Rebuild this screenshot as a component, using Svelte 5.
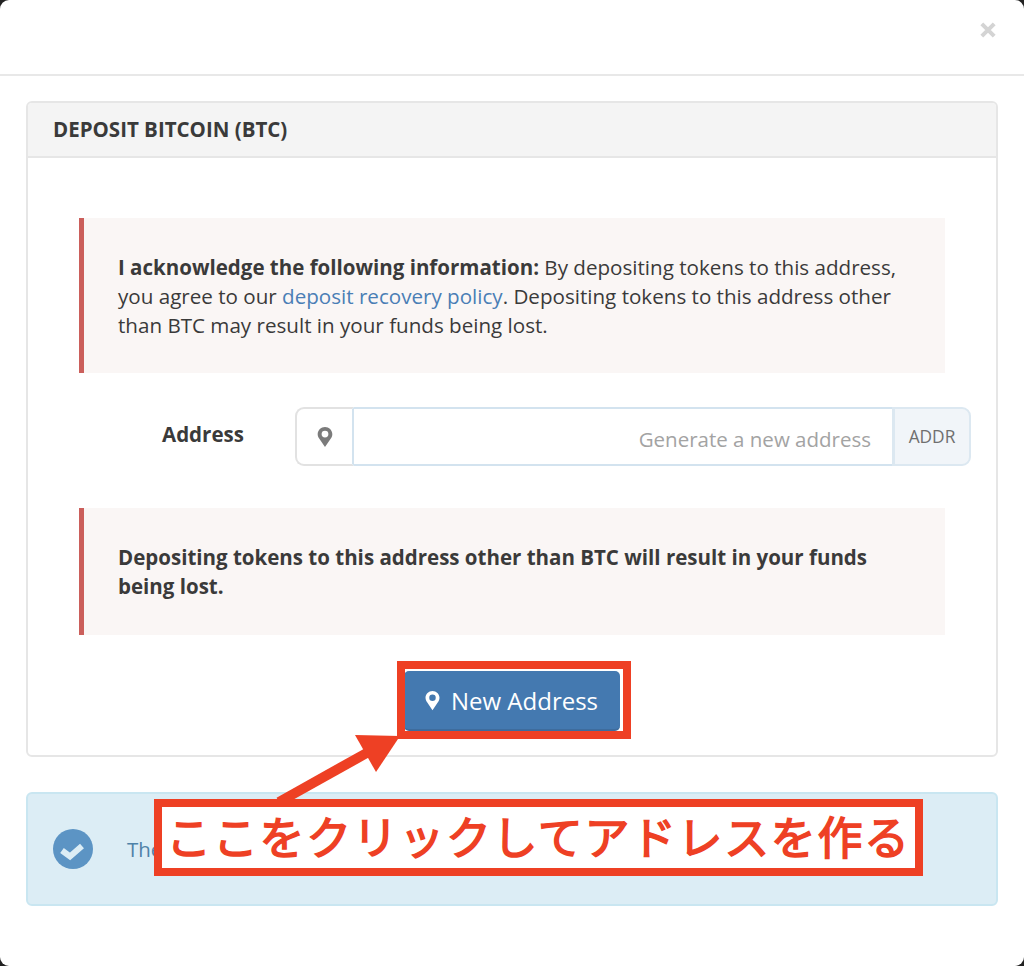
<script>
	const pin = 'M12 1C7.6 1 4 4.5 4 8.9c0 1.3.3 2.4.9 3.6L12 23l7.1-10.5c.6-1.2.9-2.3.9-3.6C20 4.5 16.4 1 12 1zm0 11.5a3.7 3.7 0 1 1 0-7.4 3.7 3.7 0 0 1 0 7.4z';
</script>

<div class="modal">
	<header class="modal-head">
		<button class="close" aria-label="Close">
			<svg viewBox="0 0 16 16" width="16" height="16">
				<path d="M1.8 1.8l12.4 12.4M14.2 1.8L1.8 14.2" stroke="#d4d4d4" stroke-width="4" fill="none" />
			</svg>
		</button>
	</header>

	<div class="modal-body">
		<section class="panel">
			<h2>DEPOSIT BITCOIN (BTC)</h2>
			<div class="panel-body">
				<div class="alert">
					<p>
						<b>I acknowledge the following information:</b> By depositing tokens to this address,
						you agree to our <a href="#policy">deposit recovery policy</a>. Depositing tokens to this
						address other than BTC may result in your funds being lost.
					</p>
				</div>

				<div class="form-row">
					<span class="label">Address</span>
					<div class="input-group">
						<span class="addon-left">
							<svg viewBox="0 0 24 24" width="22" height="22"><path d={pin} fill="#7b7b7b" fill-rule="evenodd" /></svg>
						</span>
						<input type="text" placeholder="Generate a new address" readonly />
						<span class="addon-right">ADDR</span>
					</div>
				</div>

				<div class="alert short">
					<p><b>Depositing tokens to this address other than BTC will result in your funds being lost.</b></p>
				</div>

				<div class="actions">
					<button class="primary">
						<svg viewBox="0 0 24 24" width="21" height="21"><path d={pin} fill="#fff" fill-rule="evenodd" /></svg>
						New Address
					</button>
				</div>
			</div>
		</section>

		<div class="info">
			<svg viewBox="0 0 40 40" width="40" height="40">
				<circle cx="20" cy="20" r="20" fill="#5c94c4" />
				<path d="M9 21.500l8 6L29 17" stroke="#dcedf5" stroke-width="6" fill="none" />
			</svg>
			<span>The</span>
		</div>
	</div>

	<!-- annotations drawn over the screenshot -->
	<div class="mark-button"></div>
	<svg class="arrow" viewBox="0 0 1024 966" width="1024" height="966">
		<path d="M279 802L372 750" stroke="#ee4024" stroke-width="10" fill="none" />
		<polygon points="355,735 400,736 376,772" fill="#ee4024" />
	</svg>
	<div class="callout">ここをクリックしてアドレスを作る</div>
</div>

<style>
	:global(body) {
		margin: 0;
		background: #222;
	}

	.modal {
		position: relative;
		width: 1024px;
		height: 966px;
		background: #fff;
		border-radius: 9px;
		overflow: hidden;
		font-family: 'Open Sans', sans-serif;
		color: #3a3a3a;
	}

	.modal-head {
		height: 76px;
		border-bottom: 2px solid #e8e8e8;
		display: flex;
		justify-content: flex-end;
		padding: 22px 28px 0 0;
		box-sizing: border-box;
	}

	.close {
		border: 0;
		padding: 0;
		background: none;
		width: 16px;
		height: 16px;
	}

	.close svg {
		display: block;
	}

	.modal-body {
		padding: 25px 26px 0;
	}

	.panel {
		border: 2px solid #e6e6e6;
		border-radius: 6px;
		height: 656px;
		box-sizing: border-box;
	}

	h2 {
		margin: 0;
		height: 55px;
		box-sizing: border-box;
		padding: 0 25px;
		line-height: 53px;
		font-size: 20.500px;
		font-weight: 700;
		background: #f4f4f4;
		border-bottom: 2px solid #e6e6e6;
		border-radius: 4px 4px 0 0;
	}

	.panel-body {
		padding: 60px 25px 0 51px;
	}

	.alert {
		width: 866px;
		height: 155px;
		box-sizing: border-box;
		background: #faf6f5;
		border-left: 5px solid #cb5f5b;
		padding: 35px 30px 0 34px;
		font-size: 20.600px;
		line-height: 29px;
	}

	.alert.short {
		height: 127px;
	}

	.alert p {
		margin: 0;
	}

	.alert b {
		font-size: 20.500px;
		font-weight: 700;
	}

	.alert a {
		color: #4a7eb5;
		text-decoration: none;
	}

	.form-row {
		display: flex;
		align-items: flex-start;
		margin: 34px 0 42px;
	}

	.label {
		width: 216px;
		padding: 10px 0 0 83px;
		box-sizing: border-box;
		font-size: 20.500px;
		font-weight: 700;
		line-height: 34px;
	}

	.input-group {
		display: flex;
		width: 676px;
		height: 59px;
	}

	.addon-left {
		width: 59px;
		box-sizing: border-box;
		border: 2px solid #e2e2e2;
		border-right: 2px solid #d3e3ef;
		border-radius: 9px 0 0 9px;
		display: flex;
		align-items: center;
		justify-content: center;
	}

	input {
		flex: 1;
		min-width: 0;
		box-sizing: border-box;
		border: 2px solid #d3e3ef;
		border-width: 2px 0;
		padding: 4px 21px 0 0;
		text-align: right;
		font: 20.500px 'Open Sans', sans-serif;
		outline: none;
	}

	input::placeholder {
		color: #a3a3a3;
		opacity: 1;
	}

	.addon-right {
		width: 79px;
		box-sizing: border-box;
		background: #f1f5f9;
		border: 2px solid #dce8f1;
		border-left-width: 3px;
		border-radius: 0 9px 9px 0;
		display: flex;
		align-items: center;
		justify-content: center;
		font-size: 17.300px;
		color: #6f6f6f;
	}

	.actions {
		width: 866px;
		display: flex;
		justify-content: center;
		margin-top: 36px;
	}

	.primary {
		width: 216px;
		height: 60px;
		display: flex;
		align-items: center;
		justify-content: center;
		gap: 8px;
		border: 0;
		border-bottom: 2px solid #3e6c9d;
		border-radius: 5px;
		padding: 0 4px 0 0;
		background: #4479b0;
		color: #fff;
		font: 24px 'Open Sans', sans-serif;
	}

	.info {
		margin-top: 35px;
		height: 114px;
		box-sizing: border-box;
		background: #dcedf5;
		border: 2px solid #c9e6f1;
		border-radius: 6px;
		display: flex;
		align-items: flex-start;
		padding: 35px 0 0 25px;
		gap: 34px;
		color: #4f82a8;
		font-size: 20.500px;
		line-height: 40px;
	}

	.mark-button {
		position: absolute;
		left: 397px;
		top: 661px;
		width: 234px;
		height: 78px;
		box-sizing: border-box;
		border: 8px solid #ee4024;
	}

	.arrow {
		position: absolute;
		left: 0;
		top: 0;
		pointer-events: none;
	}

	.callout {
		position: absolute;
		left: 154px;
		top: 799px;
		width: 769px;
		height: 77px;
		box-sizing: border-box;
		border: 8px solid #ee4024;
		background: #fff;
		color: #ee4024;
		font-family: 'Noto Sans CJK JP', sans-serif;
		font-size: 45px;
		font-weight: 400;
		letter-spacing: 1.600px;
		-webkit-text-stroke: 1.500px #ee4024;
		line-height: 58px;
		text-align: center;
		white-space: nowrap;
	}
</style>
